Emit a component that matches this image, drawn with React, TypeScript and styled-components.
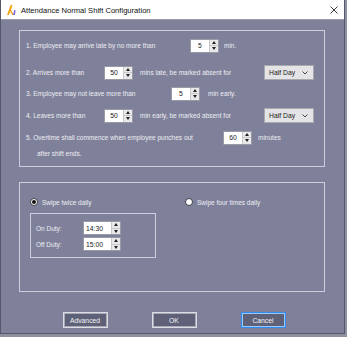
import styled, { createGlobalStyle } from 'styled-components';

const Global = createGlobalStyle`
  html, body {
    margin: 0;
    padding: 0;
    background: #8f91a0;
  }
  body {
    font-family: "Liberation Sans", Arial, sans-serif;
  }
`;

const Window = styled.div`
  width: 345px;
  height: 334px;
  box-sizing: border-box;
  border: 1px solid #55586b;
  border-top: none;
  background: #7f819a;
  display: flex;
  flex-direction: column;
`;

const TitleBar = styled.div`
  height: 19px;
  background: #ffffff;
  border-bottom: 1px solid #9a9cab;
  display: flex;
  align-items: center;
  padding: 0 6px 0 5px;
  gap: 4px;
  font-size: 7.6px;
  color: #111;
`;

const TitleText = styled.span`
  flex: 1;
  padding-top: 1px;
`;

const Body = styled.div`
  flex: 1;
  display: flex;
  flex-direction: column;
  padding: 10px 19px 0 18px;
  color: #eeeef4;
  font-size: 6.5px;
`;

const Group = styled.div<{ $h: number; $mt?: number }>`
  height: ${(p) => p.$h}px;
  margin-top: ${(p) => p.$mt ?? 0}px;
  box-sizing: border-box;
  border: 1px solid #cdcedb;
  padding: 0 6px;
  display: flex;
  flex-direction: column;
`;

const Row = styled.div<{ $mt: number }>`
  display: flex;
  align-items: center;
  height: 15px;
  margin-top: ${(p) => p.$mt}px;
`;

const Label = styled.span<{ $w?: number; $pl?: number }>`
  box-sizing: border-box;
  width: ${(p) => (p.$w ? `${p.$w}px` : 'auto')};
  padding-left: ${(p) => p.$pl ?? 0}px;
  flex: none;
  white-space: nowrap;
`;

const Spin = styled.div<{ $w: number }>`
  width: ${(p) => p.$w}px;
  height: 14px;
  box-sizing: border-box;
  border: 1px solid #9a9aa6;
  background: #fff;
  display: flex;
  flex: none;
`;

const Field = styled.div<{ $left?: boolean }>`
  flex: 1;
  display: flex;
  align-items: center;
  justify-content: ${(p) => (p.$left ? 'flex-start' : 'center')};
  padding-left: ${(p) => (p.$left ? 2 : 0)}px;
  color: #222;
  font-size: 6.8px;
`;

const Arrows = styled.div`
  width: 8px;
  display: flex;
  flex-direction: column;
  border-left: 1px solid #c8c8c8;
  background: #e9e9ec;
`;

const ArrowHalf = styled.div`
  flex: 1;
  display: flex;
  align-items: center;
  justify-content: center;
  & + & {
    border-top: 1px solid #c8c8c8;
  }
`;

const Select = styled.div`
  width: 50px;
  height: 15px;
  box-sizing: border-box;
  border: 1px solid #a9a9b0;
  background: #e4e4e6;
  color: #222;
  display: flex;
  align-items: center;
  justify-content: space-between;
  padding: 0 5px 0 4px;
  font-size: 6.8px;
  flex: none;
`;

const RadioRow = styled.div`
  display: flex;
  align-items: center;
  height: 12px;
  margin-top: 13px;
  padding-left: 4px;
`;

const RadioItem = styled.div<{ $w?: number }>`
  display: flex;
  align-items: center;
  gap: 4px;
  width: ${(p) => (p.$w ? `${p.$w}px` : 'auto')};
`;

const RadioDot = styled.span<{ $on?: boolean }>`
  width: 8px;
  height: 8px;
  box-sizing: border-box;
  border-radius: 50%;
  background: #fff;
  border: 1px solid #3c3c48;
  display: flex;
  align-items: center;
  justify-content: center;
  &::after {
    content: '';
    width: 4px;
    height: 4px;
    border-radius: 50%;
    background: ${(p) => (p.$on ? '#111' : 'transparent')};
  }
`;

const Inner = styled.div`
  width: 126px;
  height: 45px;
  box-sizing: border-box;
  margin: 5px 0 0 4px;
  border: 1px solid #cdcedb;
  padding: 7px 5px 0;
  display: flex;
  flex-direction: column;
  gap: 2px;
`;

const TimeRow = styled.div`
  display: flex;
  align-items: center;
  height: 14px;
`;

const Buttons = styled.div`
  display: flex;
  justify-content: center;
  gap: 44px;
  margin-top: 20px;
  padding-left: 4px;
`;

const Button = styled.div<{ $focus?: boolean }>`
  width: 45px;
  height: 16px;
  box-sizing: border-box;
  border: 1px solid ${(p) => (p.$focus ? '#2f8cf0' : '#dcdce4')};
  box-shadow: inset 0 0 0 1px ${(p) => (p.$focus ? '#9fc8f5' : '#a8aab8')};
  background: #5f6178;
  color: #f2f2f6;
  display: flex;
  align-items: center;
  justify-content: center;
  font-size: 6.8px;
`;

const Arrow = ({ up }: { up?: boolean }) => (
  <svg width="4" height="3" viewBox="0 0 4 3">
    <path d={up ? 'M0 3 L2 0 L4 3 Z' : 'M0 0 L4 0 L2 3 Z'} fill="#222" />
  </svg>
);

const Spinner = ({ value, w = 29, left }: { value: string; w?: number; left?: boolean }) => (
  <Spin $w={w}>
    <Field $left={left}>{value}</Field>
    <Arrows>
      <ArrowHalf>
        <Arrow up />
      </ArrowHalf>
      <ArrowHalf>
        <Arrow />
      </ArrowHalf>
    </Arrows>
  </Spin>
);

const Dropdown = () => (
  <Select>
    <span>Half Day</span>
    <svg width="6" height="4" viewBox="0 0 6 4">
      <path d="M0.5 0.5 L3 3 L5.5 0.5" stroke="#333" strokeWidth="0.9" fill="none" />
    </svg>
  </Select>
);

const AppIcon = () => (
  <svg width="11" height="12" viewBox="0 0 11 12">
    <path d="M1 11 L4.5 1 L6.5 1 L5 6 L8 11 L6.3 11 L4.3 7.5 L3 11 Z" fill="#f0a818" />
    <path d="M7 11 L8.2 6 L9.5 6 L9 11 Z" fill="#7a6ad8" />
  </svg>
);

const CloseIcon = () => (
  <svg width="8" height="8" viewBox="0 0 8 8">
    <path d="M0.5 0.5 L7.5 7.5 M7.5 0.5 L0.5 7.5" stroke="#222" strokeWidth="0.9" />
  </svg>
);

const App = () => {
  return (
    <>
      <Global />
      <Window>
        <TitleBar>
          <AppIcon />
          <TitleText>Attendance Normal Shift Configuration</TitleText>
          <CloseIcon />
        </TitleBar>
        <Body>
          <Group $h={137}>
            <Row $mt={7}>
              <Label $w={164}>1. Employee may arrive late by no more than</Label>
              <Spinner value="5" />
              <Label $pl={5}>min.</Label>
            </Row>
            <Row $mt={12}>
              <Label $w={78}>2. Arrives more than</Label>
              <Spinner value="50" />
              <Label $w={131} $pl={7}>mins late, be marked absent for</Label>
              <Dropdown />
            </Row>
            <Row $mt={6}>
              <Label $w={145}>3. Employee may not leave more than</Label>
              <Spinner value="5" />
              <Label $pl={8}>min early.</Label>
            </Row>
            <Row $mt={7}>
              <Label $w={78}>4. Leaves more than</Label>
              <Spinner value="50" />
              <Label $w={131} $pl={7}>min early, be marked absent for</Label>
              <Dropdown />
            </Row>
            <Row $mt={7}>
              <Label $w={197}>5. Overtime shall commence when employee punches out</Label>
              <Spinner value="60" />
              <Label $pl={6}>minutes</Label>
            </Row>
            <Row $mt={1}>
              <Label $pl={11}>after shift ends.</Label>
            </Row>
          </Group>
          <Group $h={110} $mt={15}>
            <RadioRow>
              <RadioItem $w={155}>
                <RadioDot $on />
                <span>Swipe twice daily</span>
              </RadioItem>
              <RadioItem>
                <RadioDot />
                <span>Swipe four times daily</span>
              </RadioItem>
            </RadioRow>
            <Inner>
              <TimeRow>
                <Label $w={47}>On Duty:</Label>
                <Spinner value="14:30" w={38} left />
              </TimeRow>
              <TimeRow>
                <Label $w={47}>Off Duty:</Label>
                <Spinner value="15:00" w={38} left />
              </TimeRow>
            </Inner>
          </Group>
          <Buttons>
            <Button>Advanced</Button>
            <Button>OK</Button>
            <Button $focus>Cancel</Button>
          </Buttons>
        </Body>
      </Window>
    </>
  );
};

export default App;
